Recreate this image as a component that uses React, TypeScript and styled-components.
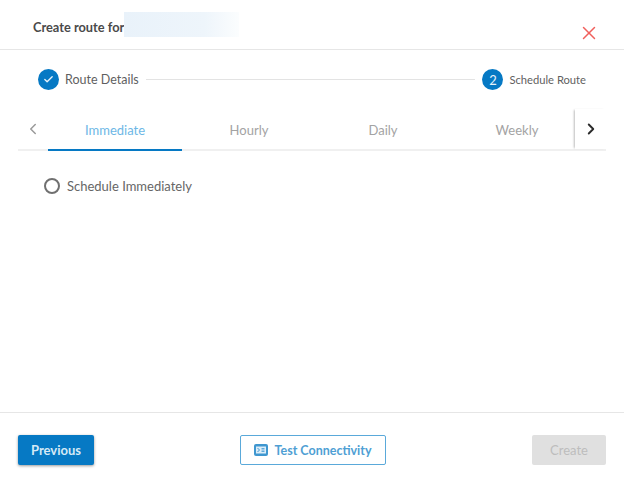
import React from "react";
import styled, { createGlobalStyle } from "styled-components";
import { Check, ChevronLeft, ChevronRight, X } from "lucide-react";

const Global = createGlobalStyle`
  html, body {
    margin: 0;
    padding: 0;
    background: #fff;
  }
  * {
    box-sizing: border-box;
  }
`;

const Dialog = styled.div`
  width: 624px;
  height: 492px;
  display: flex;
  flex-direction: column;
  font-family: Lato, "Noto Sans", sans-serif;
  background: #fff;
  overflow: hidden;
`;

const Header = styled.div`
  height: 50px;
  flex: none;
  display: flex;
  align-items: flex-start;
  justify-content: space-between;
  padding: 12px 24px 0 33px;
  border-bottom: 1px solid #e6e6e6;
`;

const TitleRow = styled.div`
  display: flex;
  align-items: center;
  height: 25px;
`;

const Title = styled.span`
  font-size: 12.8px;
  font-weight: 700;
  color: #4a4a4a;
  padding-top: 5px;
`;

const Redacted = styled.div`
  width: 115px;
  height: 25px;
  background: linear-gradient(90deg, #e9f2fa, #eef5fb 70%, #fbfdfe);
`;

const CloseButton = styled.div`
  display: flex;
  margin-top: 10px;
  color: #f0605c;
`;

const Stepper = styled.div`
  height: 59px;
  flex: none;
  display: flex;
  align-items: center;
  padding: 0 38px;
`;

const StepCircle = styled.div`
  width: 21px;
  height: 21px;
  flex: none;
  border-radius: 50%;
  background: #0679c4;
  color: #e6f2fa;
  font-size: 13px;
  font-weight: 400;
  display: flex;
  align-items: center;
  justify-content: center;
`;

const StepLabel = styled.span<{ $small?: boolean }>`
  margin-left: 6px;
  font-size: ${(p) => (p.$small ? "11.2px" : "12.5px")};
  color: #5f5f5f;
  white-space: nowrap;
`;

const StepLine = styled.div`
  flex: 1;
  height: 1px;
  margin: 0 7px;
  background: #e3e3e3;
`;

const TabBar = styled.div`
  height: 42px;
  flex: none;
  margin: 0 18px;
  display: flex;
  border-bottom: 2px solid #f0f0f0;
`;

const TabArrow = styled.div<{ $active?: boolean; $edge?: boolean }>`
  width: ${(p) => (p.$edge ? "31px" : "30px")};
  flex: none;
  display: flex;
  align-items: center;
  justify-content: center;
  color: ${(p) => (p.$active ? "#2b2b2b" : "#9a9a9a")};
  box-shadow: ${(p) => (p.$edge ? "-2px 0 2px -1px #bdbdbd" : "none")};
`;

const Tabs = styled.div`
  flex: 1;
  min-width: 0;
  margin-bottom: -2px;
  display: flex;
  overflow: hidden;
`;

const Tab = styled.div<{ $active?: boolean }>`
  flex: none;
  width: 134px;
  height: 42px;
  display: flex;
  align-items: center;
  justify-content: center;
  padding-top: 2px;
  font-size: 13px;
  color: ${(p) => (p.$active ? "#6db7e6" : "#a3a3a3")};
  border-bottom: 2px solid ${(p) => (p.$active ? "#0679c4" : "transparent")};
`;

const Content = styled.div`
  flex: 1;
  padding: 27px 44px 0;
`;

const RadioRow = styled.label`
  display: flex;
  align-items: center;
  gap: 7px;
  font-size: 13px;
  color: #666;
`;

const RadioDot = styled.span`
  width: 16px;
  height: 16px;
  border-radius: 50%;
  border: 2px solid #707070;
`;

const Footer = styled.div`
  height: 80px;
  flex: none;
  display: flex;
  align-items: flex-start;
  justify-content: space-between;
  padding: 22px 18px 0;
  border-top: 1px solid #e6e6e6;
`;

const Button = styled.div<{ $variant: "primary" | "outline" | "disabled" }>`
  height: 30px;
  display: flex;
  align-items: center;
  justify-content: center;
  gap: 6px;
  border-radius: 2px;
  font-size: ${(p) => (p.$variant === "outline" ? "12.5px" : "13px")};
  width: ${(p) => (p.$variant === "outline" ? "146px" : p.$variant === "primary" ? "76px" : "74px")};
  color: ${(p) => (p.$variant === "primary" ? "#d5e9f6" : p.$variant === "outline" ? "#4f9fd4" : "#bdbdbd")};
  background: ${(p) => (p.$variant === "primary" ? "#0679c4" : p.$variant === "outline" ? "#fff" : "#e0e0e0")};
  border: ${(p) => (p.$variant === "outline" ? "1px solid #5aa9da" : "none")};
  box-shadow: ${(p) => (p.$variant === "primary" ? "0 1px 3px rgba(0,0,0,.4)" : "none")};
  font-weight: ${(p) => (p.$variant === "disabled" ? 400 : 700)};
`;

const TerminalIcon = () => (
  <svg width="14" height="12" viewBox="0 0 14 12">
    <rect x="0" y="0" width="14" height="12" rx="2" fill="#3f97d0" />
    <rect x="2" y="2.5" width="10" height="7" fill="#dcedf8" />
    <path d="M3.5 4l2 2-2 2" fill="none" stroke="#3f97d0" strokeWidth="1" />
    <path d="M7.5 4.5h3M7.5 6h3M7.5 7.5h3" stroke="#3f97d0" strokeWidth="0.8" />
  </svg>
);

export default function App() {
  return (
    <Dialog>
      <Global />
      <Header>
        <TitleRow>
          <Title>Create route for</Title>
          <Redacted />
        </TitleRow>
        <CloseButton>
          <X size={22} strokeWidth={1.6} />
        </CloseButton>
      </Header>

      <Stepper>
        <StepCircle>
          <Check size={11} strokeWidth={3} />
        </StepCircle>
        <StepLabel>Route Details</StepLabel>
        <StepLine />
        <StepCircle>2</StepCircle>
        <StepLabel $small>Schedule Route</StepLabel>
      </Stepper>

      <TabBar>
        <TabArrow>
          <ChevronLeft size={18} strokeWidth={2} />
        </TabArrow>
        <Tabs>
          <Tab $active>Immediate</Tab>
          <Tab>Hourly</Tab>
          <Tab>Daily</Tab>
          <Tab>Weekly</Tab>
        </Tabs>
        <TabArrow $active $edge>
          <ChevronRight size={18} strokeWidth={2.5} />
        </TabArrow>
      </TabBar>

      <Content>
        <RadioRow>
          <RadioDot />
          Schedule Immediately
        </RadioRow>
      </Content>

      <Footer>
        <Button $variant="primary">Previous</Button>
        <Button $variant="outline">
          <TerminalIcon />
          Test Connectivity
        </Button>
        <Button $variant="disabled">Create</Button>
      </Footer>
    </Dialog>
  );
}
